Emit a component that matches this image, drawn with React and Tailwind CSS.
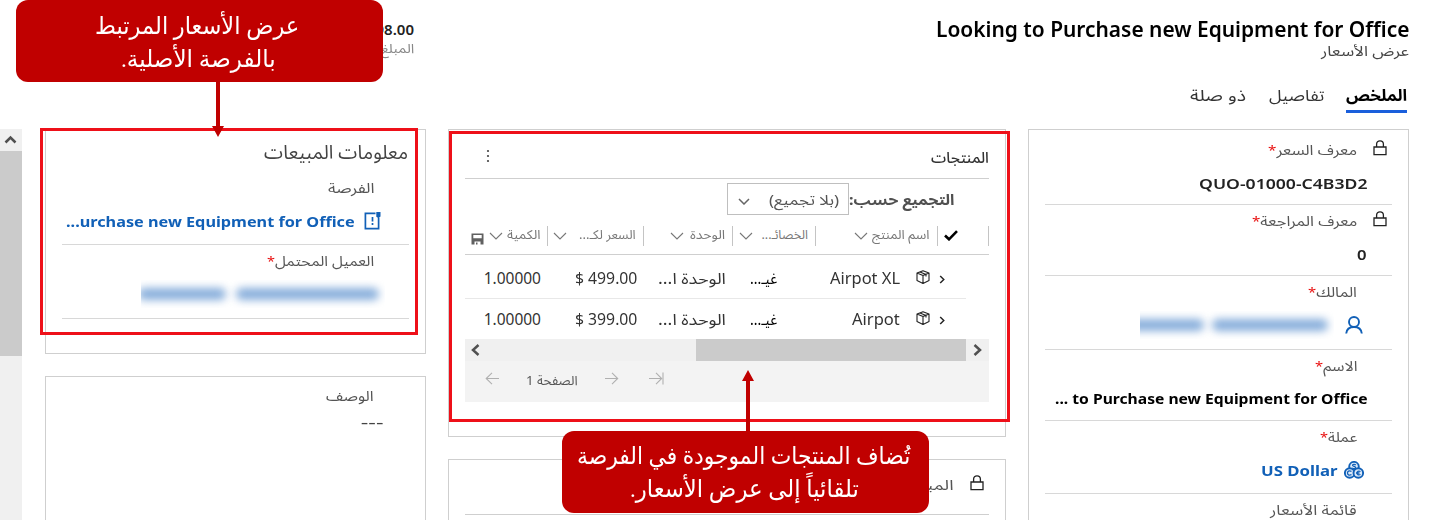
import React, { useLayoutEffect, useRef, useState } from "react";

/* One line of text that is condensed or stretched to the width of its box. */
function Fit({ className = "", dir = "rtl", children }) {
  const box = useRef(null);
  const line = useRef(null);
  const [scale, setScale] = useState(1);
  useLayoutEffect(() => {
    const measure = () => {
      const natural = line.current.offsetWidth;
      if (natural) setScale(box.current.offsetWidth / natural);
    };
    measure();
    document.fonts?.ready.then(measure);
  }, []);
  return (
    <span ref={box} dir="rtl" className={`flex shrink-0 whitespace-nowrap leading-none ${className}`}>
      <span ref={line} dir={dir} className="block shrink-0 origin-right" style={{ transform: `scaleX(${scale})` }}>
        {children}
      </span>
    </span>
  );
}

const Lock = ({ className = "" }) => (
  <svg viewBox="0 0 14 16" className={`h-4 w-3.5 shrink-0 ${className}`} fill="none" stroke="#222" strokeWidth="1.3">
    <path d="M1 7h12v7.6H1zM3.6 7V4.2C3.6 2.2 5 .9 7 .9s3.4 1.3 3.4 3.3V7" />
  </svg>
);

const Chevron = ({ className = "" }) => (
  <svg viewBox="0 0 14 8" className={`h-2 w-3.5 shrink-0 ${className}`} fill="none" stroke="currentColor" strokeWidth="1.1">
    <path d="M1 1l6 6 6-6" />
  </svg>
);

const Cube = ({ className = "" }) => (
  <svg viewBox="0 0 14 14" className={`size-3.5 shrink-0 ${className}`} fill="none" stroke="#222" strokeWidth="1.1" strokeLinejoin="round">
    <path d="M7 .8l6 2.2v7.5L7 13.4l-6-2.900V3zM1 3l6 2.600L13 3M7 5.600v7.800M4 1.900l6 2.500v2.200" />
  </svg>
);

const Arrow = ({ className = "", flip, last }) => (
  <svg viewBox="0 0 15 13" className={`h-[13px] w-[15px] shrink-0 ${className}`} fill="none" stroke="#b0b0b0" strokeWidth="1.1">
    {flip ? <path d="M14 6.500H1M7 .8L1.200 6.500 7 12.200" /> : <path d="M0 6.500h12.500M7 .8l5.700 5.700L7 12.200" />}
    {last && <path d="M14 .5v12" />}
  </svg>
);

const Star = () => <span className="text-[13px] text-[#e81010]">*</span>;

function Field({ lock, label, labelW, star, className = "", children }) {
  return (
    <div className={`flex shrink-0 flex-col border-b border-[#d8d8d8] ${className}`}>
      <div className={`flex h-[31px] shrink-0 items-center text-[14px] text-[#555] ${lock ? "pr-[5px]" : "pr-[35px]"}`}>
        {lock && <Lock className="ml-4 -mt-1" />}
        <Fit className={labelW}>
          {label}
          {star && <Star />}
        </Fit>
      </div>
      <div className="flex h-9 shrink-0 items-center">{children}</div>
    </div>
  );
}

const columns = [
  { name: "اسم المنتج", cell: "w-[122px]", text: "w-[58px]", gap: "mr-1" },
  { name: "الخصائـ...", cell: "w-[83px]", text: "w-[46px]", gap: "mr-[9px]" },
  { name: "الوحدة", cell: "w-[89px]", text: "w-[35px]", gap: "mr-[6px]" },
  { name: "السعر لكـ...", cell: "w-[96px]", text: "w-[57px]", gap: "mr-3" },
];

function ProductRow({ name, nameW, price }) {
  return (
    <div className="flex h-10 items-center pr-[44px] pt-px text-[15.500px] text-[#333]">
      <svg viewBox="0 0 6 10" className="mt-0.5 h-[9px] w-[6px] shrink-0" fill="none" stroke="#222" strokeWidth="1.600">
        <path d="M1 1l4 4-4 4" />
      </svg>
      <Cube className="mr-[9px] -mt-1" />
      <div className="mr-4 flex w-[123px] shrink-0">
        <Fit dir="ltr" className={nameW}>{name}</Fit>
      </div>
      <div className="flex w-[51px] shrink-0">
        <Fit className="w-[27px] text-black">غيـ...</Fit>
      </div>
      <div className="flex w-[89px] shrink-0">
        <Fit className="w-[68px]">الوحدة ا...</Fit>
      </div>
      <div className="flex w-24 shrink-0">
        <Fit dir="ltr" className="w-[62px]">{price}</Fit>
      </div>
      <Fit dir="ltr" className="w-[57px]">1.00000</Fit>
    </div>
  );
}

function QuoteCard() {
  return (
    <section className="flex h-[400px] w-[381px] shrink-0 flex-col border border-[#cfcfcf] px-4 pt-1">
      <Field lock star label="معرف السعر" labelW="w-[89px]" className="h-[71px]">
        <Fit dir="ltr" className="mr-[25px] w-[169px] text-[15px] font-semibold text-[#222]">QUO-01000-C4B3D2</Fit>
      </Field>
      <Field lock star label="معرف المراجعة" labelW="w-[105px]" className="h-[71px]">
        <Fit dir="ltr" className="mr-[25px] w-[10px] text-[15px] font-semibold text-[#222]">0</Fit>
      </Field>
      <Field star label="المالك" labelW="w-[49px]" className="h-[74px]">
        <svg viewBox="0 0 18 18" className="mr-[29px] size-[18px]" fill="none" stroke="#1160b7" strokeWidth="1.900">
          <circle cx="9" cy="6" r="5" />
          <path d="M1.200 17.500C1.600 13.500 4.500 11 9 11s7.400 2.500 7.800 6.500" />
        </svg>
        <div className="mr-[11px] flex h-7 w-[194px] items-center gap-2 overflow-hidden">
          <div className="mr-1.5 h-3 w-[116px] shrink-0 rounded-md bg-[#86addb] blur-[4px]" />
          <div className="h-3 w-[80px] shrink-0 rounded-md bg-[#86addb] blur-[4px]" />
        </div>
      </Field>
      <Field star label="الاسم" labelW="w-[43px]" className="h-[71px]">
        <Fit dir="ltr" className="mr-6 w-[313px] text-[14px] font-bold text-black">... to Purchase new Equipment for Office</Fit>
      </Field>
      <Field star label="عملة" labelW="w-[37px]" className="h-[73px]">
        <svg viewBox="0 0 20 18" className="mr-[28px] h-[18px] w-5" fill="#dce9f8" stroke="#1160b7" strokeWidth="1.900">
          <circle cx="10" cy="5.700" r="4.800" />
          <circle cx="5.700" cy="12" r="4.800" />
          <circle cx="14.300" cy="12" r="4.800" />
          <path d="M11.800 4c-1-1-3.400-.8-3.200.5.200 1.200 3 .8 3 2.200 0 1.200-2.400 1.200-3.400.2M7.500 10.300c-2.800-1-4 0-4 1.700s1.400 2.600 4 1.700M16.500 10.500c-2.200-.9-3.500 0-3.500 1.500s1.300 2.300 3.500 1.500M12 12h3.500" strokeWidth="1.300" />
        </svg>
        <Fit dir="ltr" className="mr-[7px] w-[77px] text-[15px] font-bold text-[#1160b7]">US Dollar</Fit>
      </Field>
      <Field label="قائمة الأسعار" labelW="w-[87px]" className="h-[71px]" />
    </section>
  );
}

function ProductsCard() {
  return (
    <section className="flex h-[308px] flex-col border border-[#cfcfcf] px-4">
      <div className="flex h-[49px] shrink-0 items-center justify-between border-b border-[#cfcfcf] pt-1.5">
        <Fit className="w-[58px] text-[15px] font-medium text-[#333]">المنتجات</Fit>
        <svg viewBox="0 0 4 14" className="-mt-0.5 ml-[21px] h-3.5 w-1" fill="#444">
          <circle cx="2" cy="2" r="1.100" />
          <circle cx="2" cy="7" r="1.100" />
          <circle cx="2" cy="12" r="1.100" />
        </svg>
      </div>
      <div className="flex h-10 shrink-0 items-center pr-[34px]">
        <Fit className="w-[106px] text-[15px] font-bold text-[#505050]">التجميع حسب:</Fit>
        <div className="flex h-8 w-[122px] shrink-0 items-center border border-[#bfbfbf] text-[#555]">
          <Fit className="mr-[9px] w-[70px] text-[14.500px]">(بلا تجميع)</Fit>
          <svg viewBox="0 0 12 7" className="mr-[19px] mt-1 h-[7px] w-3" fill="none" stroke="#666" strokeWidth="1.500">
            <path d="M1 1l5 5 5-5" />
          </svg>
        </div>
      </div>
      <div className="flex h-9 shrink-0 items-center border-b border-[#cfcfcf] pb-0.5 text-[12.500px] text-[#777]">
        <div className="flex h-5 w-[52px] shrink-0 items-center border-x border-[#c4c4c4] pr-[30px]">
          <svg viewBox="0 0 14 11" className="h-[11px] w-3.5 shrink-0" fill="none" stroke="#000" strokeWidth="2.600">
            <path d="M1 5.500l4 3.800L13 1.200" />
          </svg>
        </div>
        {columns.map((c) => (
          <div key={c.name} className={`flex h-5 shrink-0 items-center border-l border-[#c4c4c4] pr-[7px] ${c.cell}`}>
            <Fit className={c.text}>{c.name}</Fit>
            <Chevron className={c.gap} />
          </div>
        ))}
        <Fit className="mr-[6px] w-[34px]">الكمية</Fit>
        <Chevron className="mr-1" />
        <svg viewBox="0 0 13 12" className="mr-[5px] mt-1.5 h-3 w-[13px] shrink-0">
          <path d="M.5 .5h12V11.500h-3V8.500h-6v3h-3zM2.300 2v3.200h8.400V2z" fill="#606060" fillRule="evenodd" />
          <path d="M5 9.500h1.500v2H5z" fill="#606060" />
        </svg>
      </div>
      <div className="flex shrink-0 flex-col pt-[3px]">
        <ProductRow name="Airpot XL" nameW="w-[70px]" price="$ 499.00" />
        <div className="mr-[23px] h-px bg-[#e8e8e8]" />
        <ProductRow name="Airpot" nameW="w-[48px]" price="$ 399.00" />
      </div>
      <div className="flex h-[22px] shrink-0 items-center bg-[#f0f0f0]">
        <svg viewBox="0 0 23 22" className="h-[22px] w-[23px] shrink-0" fill="none" stroke="#505050" strokeWidth="2.500">
          <path d="M8.500 6l5.500 5-5.500 5" />
        </svg>
        <div className="h-full w-[270px] shrink-0 bg-[#cbcbcb]" />
        <div className="grow" />
        <svg viewBox="0 0 22 22" className="h-[22px] w-[22px] shrink-0" fill="none" stroke="#505050" strokeWidth="2.500">
          <path d="M13.500 6L8 11l5.500 5" />
        </svg>
      </div>
      <div className="flex h-[41px] shrink-0 items-center bg-[#f3f3f3] pb-1.5 pr-[325px] text-[13px] text-[#555]">
        <Arrow last />
        <Arrow className="mr-[29px]" />
        <Fit className="mr-[27px] mt-1 w-[52px]">الصفحة 1</Fit>
        <Arrow flip className="mr-[26px]" />
      </div>
    </section>
  );
}

function SalesColumn() {
  return (
    <div className="flex w-[381px] shrink-0 flex-col gap-[22px]">
      <section className="flex h-[225px] shrink-0 flex-col border border-[#cfcfcf] px-4">
        <div className="flex h-[42px] shrink-0 items-center pr-px pt-0.5">
          <Fit className="w-36 text-[19px] text-[#444]">معلومات المبيعات</Fit>
        </div>
        <Field label="الفرصة" labelW="w-[46px]" className="h-[73px]">
          <svg viewBox="0 0 17 18" className="mr-[28px] h-[18px] w-[17px]" fill="none" stroke="#1160b7" strokeWidth="1.700">
            <path d="M11.500 1.300H1.400v15.400h13.200V6" />
            <path d="M12.300 0h4.200v4.500l-2 1.700-2.200-1.500z" fill="#1160b7" stroke="none" />
            <path d="M8.500 5v4.500M8.500 11v2" />
          </svg>
          <Fit dir="ltr" className="mr-[9px] w-[289px] text-[14.500px] font-bold text-[#1160b7]">...urchase new Equipment for Office</Fit>
        </Field>
        <Field star label="العميل المحتمل" labelW="w-[107px]" className="h-[74px]">
          <div className="mr-[24px] flex h-7 w-[244px] items-center gap-2.5 overflow-hidden">
            <div className="mr-1.5 h-3 w-[143px] shrink-0 rounded-md bg-[#86addb] blur-[4px]" />
            <div className="h-3 w-[88px] shrink-0 rounded-md bg-[#86addb] blur-[4px]" />
          </div>
        </Field>
      </section>
      <section className="flex h-[160px] shrink-0 flex-col border border-[#cfcfcf] px-4 pt-0.5 text-[#444]">
        <div className="flex h-[33px] items-center pr-[35px] text-[14px] text-[#555]">
          <Fit className="w-[48px]">الوصف</Fit>
        </div>
        <div className="flex h-5 items-center pr-[26px] text-base">
          <Fit dir="ltr" className="w-[22px]">---</Fit>
        </div>
      </section>
    </div>
  );
}

export default function App() {
  return (
    <div
      dir="rtl"
      className="relative flex h-[520px] w-[1429px] flex-col overflow-hidden bg-white font-['Noto_Sans','Noto_Sans_Arabic','DejaVu_Sans',sans-serif]"
    >
      <header className="flex h-[129px] shrink-0 justify-between pr-5">
        <div className="flex flex-col">
          <div className="flex h-[42px] items-center pt-[17px]">
            <Fit dir="ltr" className="w-[473px] text-[21px] font-semibold text-black">Looking to Purchase new Equipment for Office</Fit>
          </div>
          <div className="flex h-[18px] items-center text-[14px] text-[#444]">
            <Fit className="w-[88px]">عرض الأسعار</Fit>
          </div>
          <nav className="flex pr-0.5 pt-[22px] text-[16px] text-[#333]">
            <div className="flex h-[31px] items-center border-b-3 border-[#1a5fdc] pb-0.5 font-bold text-black">
              <Fit className="w-[61px]">الملخص</Fit>
            </div>
            <div className="mr-[22px] flex h-7 items-center pb-0.5">
              <Fit className="w-[55px]">تفاصيل</Fit>
            </div>
            <div className="mr-[23px] flex h-7 items-center pb-0.5">
              <Fit className="w-[56px]">ذو صلة</Fit>
            </div>
          </nav>
        </div>
        <div className="flex w-[414px] flex-col pt-[19px]">
          <div className="flex h-5 items-center">
            <Fit dir="ltr" className="w-[38px] text-[15px] font-semibold text-[#222]">98.00</Fit>
          </div>
          <div className="flex h-[18px] items-center text-[13px] text-[#888]">
            <Fit className="w-[33px]">المبلغ</Fit>
          </div>
        </div>
      </header>

      <main className="flex grow pr-5">
        <QuoteCard />
        <div className="mr-[22px] flex w-[558px] shrink-0 flex-col gap-[22px]">
          <ProductsCard />
          <section className="flex h-20 shrink-0 flex-col border border-[#cfcfcf] px-4">
            <div className="flex h-[55px] shrink-0 items-center border-b border-[#cfcfcf] pr-[5px] text-[14px] text-[#555]">
              <Lock className="-mt-2" />
              <Fit className="mr-[17px] -mt-1 w-[42px]">المبلغ</Fit>
            </div>
          </section>
        </div>
        <div className="mr-[22px] flex">
          <SalesColumn />
        </div>
        <div className="mr-auto flex w-[22px] shrink-0 flex-col bg-[#f0f0f0]">
          <svg viewBox="0 0 22 22" className="size-[22px]" fill="none" stroke="#505050" strokeWidth="2.500">
            <path d="M5.500 13.500l5-5 5 5" />
          </svg>
          <div className="h-[205px] bg-[#cbcbcb]" />
        </div>
      </main>

      <div className="absolute left-[40px] top-[128px] h-[207px] w-[378px] border-3 border-[#ee1019]" />
      <div className="absolute left-[449px] top-[131px] h-[291px] w-[561px] border-3 border-[#ee1019]" />

      <div className="absolute left-4 top-0 flex h-[82px] w-[367px] flex-col items-center rounded-xl bg-[#c00000] pt-[9px] font-['Liberation_Serif','Times_New_Roman','DejaVu_Sans',serif] text-[24px] text-white">
        <div className="flex h-[33px] items-center pr-[5px]"><Fit className="w-[204px]">عرض الأسعار المرتبط</Fit></div>
        <div className="flex h-[33px] items-center pr-[2px]"><Fit className="w-[155px]">بالفرصة الأصلية.</Fit></div>
      </div>
      <svg viewBox="0 0 12 56" className="absolute left-[212px] top-[81px] h-14 w-3" fill="#c00000">
        <path d="M4 0h4v45h4L6 56 0 45h4z" />
      </svg>

      <div className="absolute left-[562px] top-[431px] flex h-[82px] w-[367px] flex-col items-center rounded-xl bg-[#c00000] pt-2 font-['Liberation_Serif','Times_New_Roman','DejaVu_Sans',serif] text-[24px] text-white">
        <div className="flex h-[33px] items-center pr-[4px]"><Fit className="w-[333px]">تُضاف المنتجات الموجودة في الفرصة</Fit></div>
        <div className="flex h-[33px] items-center pr-[2px]"><Fit className="w-[229px]">تلقائياً إلى عرض الأسعار.</Fit></div>
      </div>
      <svg viewBox="0 0 12 62" className="absolute left-[742px] top-[370px] h-[62px] w-3" fill="#c00000">
        <path d="M4 62h4V11h4L6 0 0 11h4z" />
      </svg>
    </div>
  );
}
